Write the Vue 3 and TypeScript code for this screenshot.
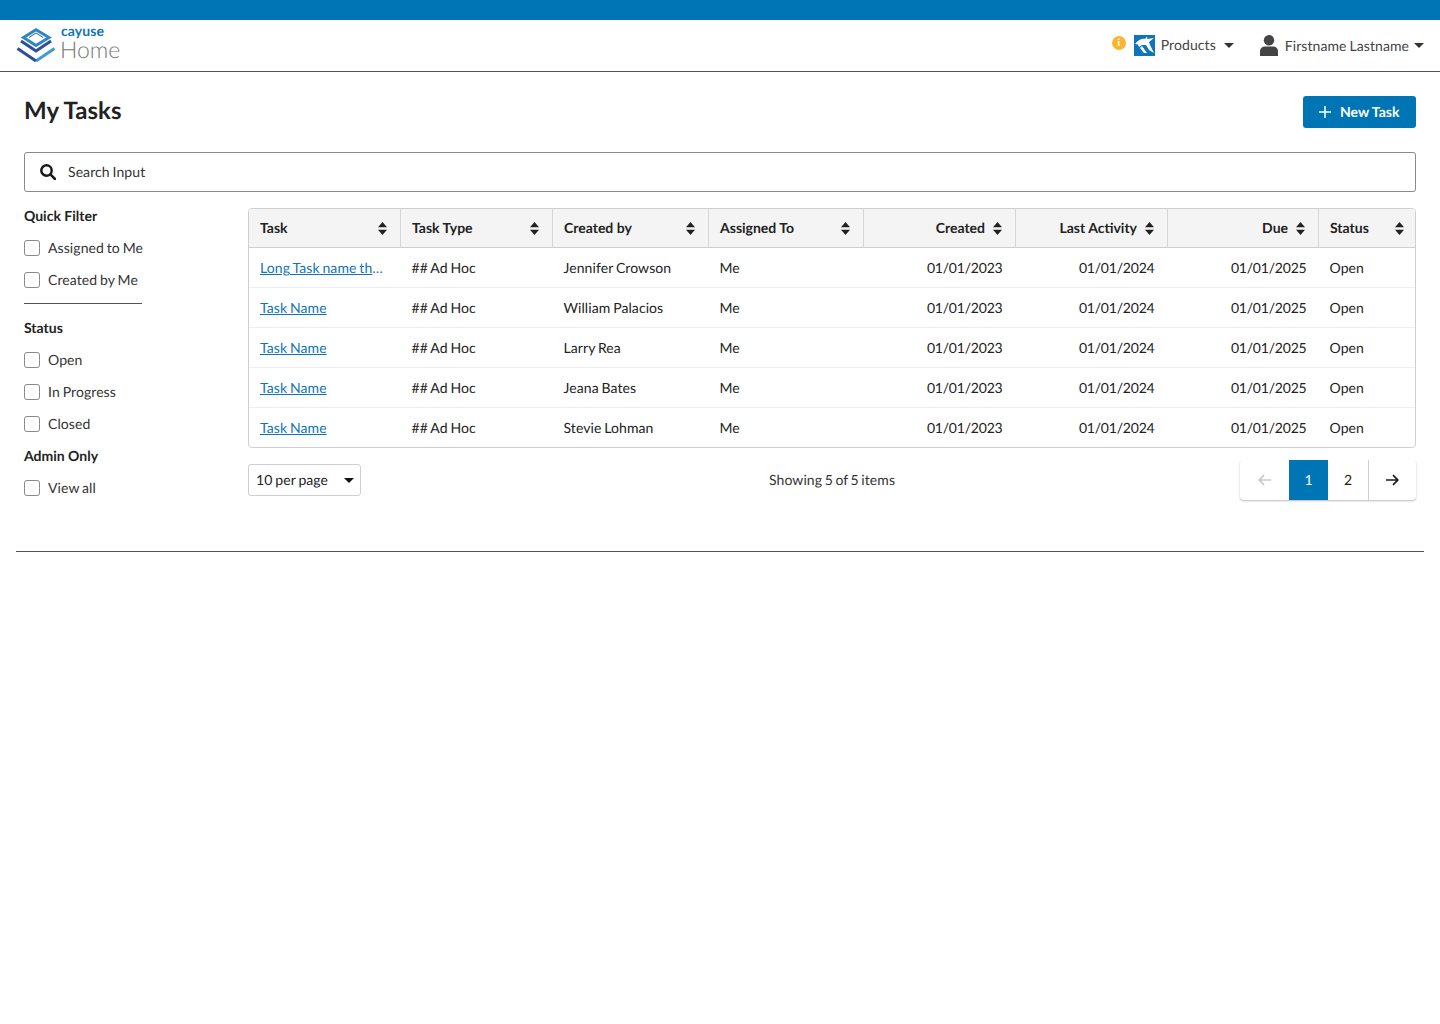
<script setup lang="ts">
interface Row { task: string; by: string; suffix?: string }
const rows: Row[] = [
  { task: 'Long Task name th', suffix: '…', by: 'Jennifer Crowson' },
  { task: 'Task Name', by: 'William Palacios' },
  { task: 'Task Name', by: 'Larry Rea' },
  { task: 'Task Name', by: 'Jeana Bates' },
  { task: 'Task Name', by: 'Stevie Lohman' }
]
const columns = [
  { label: 'Task', right: false },
  { label: 'Task Type', right: false },
  { label: 'Created by', right: false },
  { label: 'Assigned To', right: false },
  { label: 'Created', right: true },
  { label: 'Last Activity', right: true },
  { label: 'Due', right: true },
  { label: 'Status', right: false }
]
</script>

<template>
  <div class="page">
    <div class="topbar"></div>
    <header class="header">
      <div class="brand">
        <svg class="logo" width="40" height="37" viewBox="0 0 40 37" fill="none">
          <path d="M20 1.8 L33 9.5 L20 17.5 L7.5 9.5 Z" stroke="#2f86c5" stroke-width="3" />
          <path d="M13 9.5 L20 5 L27 9.5" stroke="#1f5fa8" stroke-width="1" />
          <path d="M5 13 L20 23 L35 13" stroke="#2b4f9c" stroke-width="3" />
          <path d="M20 33 L38.5 20.5" stroke="#3f9ad6" stroke-width="3" />
          <path d="M1.5 20.5 L20 33" stroke="#2b4f9c" stroke-width="3" />
        </svg>
        <div class="brand-text">
          <span class="cayuse">cayuse</span>
          <span class="home">Home</span>
        </div>
      </div>
      <div class="header-right">
        <span class="info">i</span>
        <svg class="horse" width="21" height="21" viewBox="0 0 21 21">
          <rect width="21" height="21" fill="#0f75b8" />
          <path d="M1 9 C4 5 8 3 11 4 L13 1.5 L13.5 4 L20 3 L15 7 C16 10 18 14 20 18 L15 15 L12 10 L8 10 L5 12 L4 9.5 Z" fill="#fff" />
          <path d="M8 11 L13 18 L10 18 L6 13 Z" fill="#fff" />
        </svg>
        <span class="nav-label products">Products</span>
        <span class="caret nav-caret"></span>
        <svg class="user" width="18" height="21" viewBox="0 0 18 21" fill="#444">
          <circle cx="9" cy="5.2" r="5.2" />
          <path d="M0 21 V16.5 C0 13.5 2.4 11.6 5 11.6 H13 C15.6 11.6 18 13.5 18 16.5 V21 Z" />
        </svg>
        <span class="nav-label">Firstname Lastname</span>
        <span class="caret user-caret"></span>
      </div>
    </header>

    <main class="main">
      <div class="title-row">
        <h1>My Tasks</h1>
        <button class="new-task" type="button">
          <svg width="12" height="12" viewBox="0 0 12 12" stroke="#fff" stroke-width="1.5"><path d="M6 0 V12 M0 6 H12" /></svg>
          <span>New Task</span>
        </button>
      </div>

      <div class="search">
        <svg width="16" height="16" viewBox="0 0 16 16" fill="none" stroke="#1a1a1a" stroke-width="2.5">
          <circle cx="6.5" cy="6.5" r="5.2" />
          <path d="M10.4 10.4 L15 15" stroke-linecap="round" />
        </svg>
        <span class="lift">Search Input</span>
      </div>

      <div class="content">
        <aside class="sidebar">
          <div class="group-title first">Quick Filter</div>
          <label class="check"><span class="box"></span><span class="lift">Assigned to Me</span></label>
          <label class="check"><span class="box"></span><span class="lift">Created by Me</span></label>
          <div class="divider"></div>
          <div class="group-title">Status</div>
          <label class="check"><span class="box"></span><span class="lift">Open</span></label>
          <label class="check"><span class="box"></span><span class="lift">In Progress</span></label>
          <label class="check"><span class="box"></span><span class="lift">Closed</span></label>
          <div class="group-title">Admin Only</div>
          <label class="check"><span class="box"></span><span class="lift">View all</span></label>
        </aside>

        <section class="results">
          <div class="table-wrap">
            <table>
              <thead>
                <tr>
                  <th v-for="c in columns" :key="c.label" :class="{ right: c.right }">
                    <div class="th-inner">
                      <span class="lift">{{ c.label }}</span>
                      <svg width="9" height="13" viewBox="0 0 9 13" fill="#222"><path d="M4.5 0 L9 5.3 H0 Z M0 7.7 H9 L4.5 13 Z" /></svg>
                    </div>
                  </th>
                </tr>
              </thead>
              <tbody>
                <tr v-for="(r, i) in rows" :key="i">
                  <td class="task-cell"><a href="#" class="link" @click.prevent>{{ r.task }}</a>{{ r.suffix }}</td>
                  <td>## Ad Hoc</td>
                  <td>{{ r.by }}</td>
                  <td>Me</td>
                  <td class="right">01/01/2023</td>
                  <td class="right">01/01/2024</td>
                  <td class="right due">01/01/2025</td>
                  <td>Open</td>
                </tr>
              </tbody>
            </table>
          </div>

          <div class="table-footer">
            <div class="per-page"><span class="lift">10 per page</span><span class="caret"></span></div>
            <div class="showing">Showing 5 of 5 items</div>
            <nav class="pager">
              <span class="pg arrow">
                <svg width="14" height="12" viewBox="0 0 14 12" fill="none" stroke="#c9c9c9" stroke-width="1.7"><path d="M13 6 H1.5 M6 1.2 L1.2 6 L6 10.8" /></svg>
              </span>
              <span class="pg active"><span class="lift">1</span></span>
              <span class="pg num"><span class="lift">2</span></span>
              <span class="pg arrow next">
                <svg width="14" height="12" viewBox="0 0 14 12" fill="none" stroke="#1a1a1a" stroke-width="1.7"><path d="M1 6 H12.5 M8 1.2 L12.8 6 L8 10.8" /></svg>
              </span>
            </nav>
          </div>
        </section>
      </div>
      <div class="bottom-rule"></div>
    </main>
  </div>
</template>

<style scoped>
.page { font-family: Lato, "Liberation Sans", sans-serif; font-size: 14px; color: #222; background: #fff; min-height: 1024px; text-rendering: geometricPrecision; letter-spacing: 0.08px; word-spacing: -0.8px; }
.lift { margin-top: -1px; }
.topbar { height: 20px; background: #0075b5; }
.header { height: 51px; border-bottom: 1px solid #555; display: flex; justify-content: space-between; align-items: center; padding: 0 16px; box-sizing: content-box; }
.brand { display: flex; align-items: center; gap: 5px; }
.logo { display: block; margin-top: 1px; }
.brand-text { display: flex; flex-direction: column; margin-top: -4px; }
.cayuse { font-size: 14px; line-height: 12px; font-weight: 700; color: #0f75b8; letter-spacing: 0.1px; }
.home { font-size: 23px; line-height: 25px; font-weight: 300; color: #777; margin-left: -1px; letter-spacing: 0; }
.header-right { display: flex; align-items: center; color: #444; }
.info { width: 14px; height: 14px; border-radius: 50%; background: #fbb62f; color: #fff; font-size: 10px; font-weight: 700; line-height: 14px; text-align: center; margin-right: 8px; margin-top: -5px; }
.horse { margin-right: 6px; }
.nav-label { font-size: 14px; }
.products { margin-right: 8px; margin-top: -2px; }
.caret { display: inline-block; width: 0; height: 0; border-left: 5px solid transparent; border-right: 5px solid transparent; border-top: 5px solid #333; }
.nav-caret { margin-right: 26px; margin-top: -1px; }
.user { margin-right: 7px; }
.user-caret { margin-left: 5px; margin-top: -1px; }
.main { padding: 0 16px; }
.title-row { display: flex; justify-content: space-between; align-items: center; padding: 24px 8px 0; height: 32px; box-sizing: content-box; }
h1 { margin: -3px 0 0; font-size: 24px; font-weight: 700; line-height: 32px; color: #222; letter-spacing: 0; word-spacing: 0; }
.new-task { display: flex; align-items: center; gap: 9px; width: 113px; height: 32px; padding: 0 0 0 16px; border: 0; border-radius: 3px; background: #0075b5; color: #fff; font: 700 14px Lato, sans-serif; box-sizing: border-box; text-rendering: geometricPrecision; }
.new-task span { margin-top: -1px; }
.search { margin: 24px 8px 0; height: 40px; box-sizing: border-box; border: 1px solid #8a8a8a; border-radius: 3px; display: flex; align-items: center; gap: 12px; padding-left: 15px; color: #333; }
.content { display: flex; padding: 16px 8px 0; }
.sidebar { width: 224px; flex: none; }
.group-title { font-weight: 700; line-height: 16px; margin-top: 16px; color: #222; letter-spacing: 0; word-spacing: 0; }
.group-title.first { margin-top: 0; }
.check { display: flex; align-items: center; gap: 8px; height: 16px; margin-top: 16px; color: #333; }
.box { width: 16px; height: 16px; box-sizing: border-box; border: 1px solid #8a8a8a; border-radius: 3px; background: #fff; }
.divider { width: 118px; height: 1px; background: #555; margin-top: 15px; margin-bottom: 16px; }
.divider + .group-title { margin-top: 0; }
.results { flex: 1; min-width: 0; }
.table-wrap { border: 1px solid #cfcfcf; border-radius: 4px; overflow: hidden; }
table { width: 100%; border-collapse: collapse; table-layout: fixed; }
th { height: 38px; padding: 0 13px 0 11px; background: #f4f4f4; border-bottom: 1px solid #cfcfcf; border-right: 1px solid #d6d6d6; font-weight: 700; text-align: left; color: #222; box-sizing: content-box; letter-spacing: 0; word-spacing: 0; }
th:last-child { border-right: 0; padding-right: 11px; }
.th-inner { display: flex; justify-content: space-between; align-items: center; }
th.right .th-inner { justify-content: flex-end; gap: 8px; }
th:nth-child(1) { width: 127px; }
th:nth-child(2) { width: 127px; }
th:nth-child(3) { width: 131px; }
th:nth-child(4) { width: 130px; }
th:nth-child(5) { width: 127px; }
th:nth-child(6) { width: 127px; }
th:nth-child(7) { width: 126px; }
td { height: 39px; padding: 0 12px 0 11px; border-bottom: 1px solid #eee; color: #222; white-space: nowrap; }
tr:last-child td { border-bottom: 0; height: 39px; }
td.right { text-align: right; padding-right: 13px; letter-spacing: -0.2px; }
td.due { padding-right: 12px; }
.task-cell { color: #0f75b8; }
.link { color: #0f75b8; text-decoration: underline; }
.table-footer { display: grid; grid-template-columns: 1fr auto 1fr; align-items: start; margin-top: 12px; height: 40px; }
.per-page { margin-top: 4px; width: 113px; height: 32px; box-sizing: border-box; border: 1px solid #cfcfcf; border-radius: 3px; display: flex; align-items: center; justify-content: space-between; padding: 0 6px 0 7px; color: #222; }
.per-page .caret { border-top-color: #111; }
.showing { line-height: 40px; color: #333; word-spacing: -1.1px; }
.pager { justify-self: end; display: flex; height: 40px; width: 176px; box-sizing: border-box; border-radius: 4px; box-shadow: 0 1px 2px rgba(0, 0, 0, 0.28); color: #222; }
.pg { display: flex; align-items: center; justify-content: center; height: 40px; box-sizing: border-box; }
.arrow { width: 49px; }
.active { width: 39px; background: #0075b5; color: #fff; }
.num { width: 41px; border-right: 1px solid #cfcfcf; }
.next { width: 46px; }
.bottom-rule { height: 1px; background: #555; margin-top: 51px; }
</style>

<style>
html, body { margin: 0; background: #fff; }
</style>
